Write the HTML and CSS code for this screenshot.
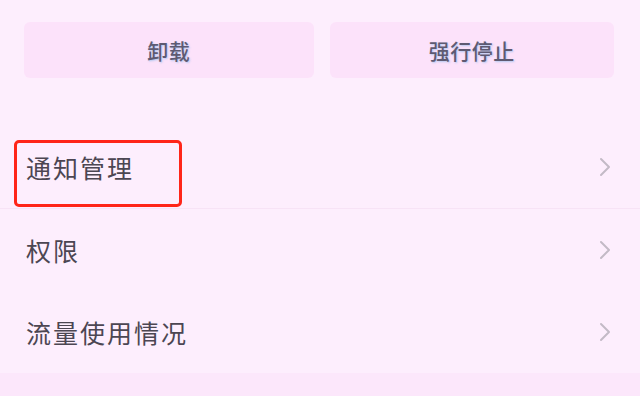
FILE: index.html
```html
<!DOCTYPE html>
<html lang="zh-CN">
<head>
<meta charset="utf-8">
<link rel="stylesheet" href="styles.css">
</head>
<body>
<div class="screen">
  <div class="actions">
    <div class="btn btn-left">卸载</div>
    <div class="btn btn-right">强行停止</div>
  </div>
  <div class="list">
    <div class="row row-sep">
      <span class="label">通知管理</span>
      <svg class="chev" viewBox="0 0 12 20" width="12" height="20"><path d="M2 2 L10 10 L2 18" fill="none" stroke="#c3bac6" stroke-width="2" stroke-linecap="round" stroke-linejoin="round"/></svg>
      <div class="highlight"></div>
    </div>
    <div class="row">
      <span class="label">权限</span>
      <svg class="chev" viewBox="0 0 12 20" width="12" height="20"><path d="M2 2 L10 10 L2 18" fill="none" stroke="#c3bac6" stroke-width="2" stroke-linecap="round" stroke-linejoin="round"/></svg>
    </div>
    <div class="row">
      <span class="label">流量使用情况</span>
      <svg class="chev" viewBox="0 0 12 20" width="12" height="20"><path d="M2 2 L10 10 L2 18" fill="none" stroke="#c3bac6" stroke-width="2" stroke-linecap="round" stroke-linejoin="round"/></svg>
    </div>
  </div>
  <div class="bottom-band"></div>
</div>
</body>
</html>
```

FILE: styles.css
```css
html, body {
  margin: 0;
  padding: 0;
  background: #fdeefd;
}
body {
  width: 640px;
  height: 396px;
  overflow: hidden;
  font-family: "Noto Sans CJK SC", "Noto Sans", sans-serif;
}
.screen {
  width: 640px;
  height: 396px;
  display: flex;
  flex-direction: column;
}
.actions {
  display: flex;
  gap: 16px;
  padding: 22px 26px 0 24px;
}
.btn {
  height: 56px;
  background: #fce2fa;
  border-radius: 6px;
  display: flex;
  align-items: center;
  justify-content: center;
  font-size: 21px;
  font-weight: 500;
  letter-spacing: 0.5px;
  color: #5e5a72;
  text-shadow: 1px 1px 2px rgba(90, 170, 230, 0.45);
}
.btn-left { flex: 289 1 0; }
.btn-right { flex: 284 1 0; }
.list {
  margin-top: 48px;
  display: flex;
  flex-direction: column;
}
.row {
  position: relative;
  height: 82px;
  display: flex;
  align-items: center;
  justify-content: space-between;
  padding: 0 29px 0 26px;
}
.row-sep {
  border-bottom: 1px solid #f7e3f6;
}
.label {
  font-size: 25px;
  letter-spacing: 2px;
  color: #4c4652;
}
.chev {
  display: block;
}
.highlight {
  position: absolute;
  left: 14px;
  top: 14px;
  width: 162px;
  height: 61px;
  border: 3px solid #ff2519;
  border-radius: 5px;
}
.bottom-band {
  flex: 1;
  background: #fce7fb;
}
```
